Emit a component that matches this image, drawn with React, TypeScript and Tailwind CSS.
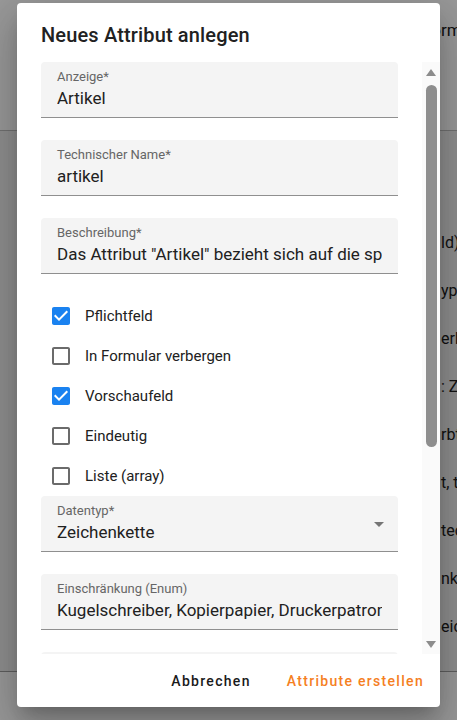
import React from 'react';

const fields = {
  top: [
    { label: 'Anzeige*', value: 'Artikel' },
    { label: 'Technischer Name*', value: 'artikel' },
    {
      label: 'Beschreibung*',
      value: 'Das Attribut "Artikel" bezieht sich auf die spezifische Bezeichnung des Produkts',
    },
  ],
};

const options = [
  { label: 'Pflichtfeld', checked: true },
  { label: 'In Formular verbergen', checked: false },
  { label: 'Vorschaufeld', checked: true },
  { label: 'Eindeutig', checked: false },
  { label: 'Liste (array)', checked: false },
];

const pageRows = ['ld) Pflicht', 'yp: Zeichenkette', 'erbergen', ': Zeichenkette', 'rbt', 't, typ', 'tec', 'nks', 'eich'];

function Field({ label, value, select }: { label: string; value: string; select?: boolean }) {
  return (
    <div className="relative h-14 shrink-0 rounded-t bg-[#f4f4f4] border-b border-[#8f8f8f] px-4">
      <div className="pt-[6px] text-[13px] leading-[17px] text-[#666666]">{label}</div>
      <div className="mt-[2px] overflow-hidden whitespace-nowrap text-[17px] leading-[23px] text-[#212121]">{value}</div>
      {select && (
        <svg className="absolute right-[7px] top-4 h-6 w-6" viewBox="0 0 24 24" fill="#757575">
          <path d="M7 10l5 5 5-5z" />
        </svg>
      )}
    </div>
  );
}

function CheckRow({ label, checked }: { label: string; checked: boolean }) {
  return (
    <div className="flex h-10 items-center">
      <svg className="ml-2 h-6 w-6 shrink-0" viewBox="0 0 24 24">
        {checked ? (
          <>
            <rect x="4" y="4" width="16" height="16" fill="#ffffff" />
            <path
              fill="#1a82f0"
              d="M19 3H5c-1.11 0-2 .9-2 2v14c0 1.1.89 2 2 2h14c1.11 0 2-.9 2-2V5c0-1.1-.89-2-2-2zm-9 14l-5-5 1.41-1.41L10 14.17l7.59-7.59L19 8l-9 9z"
            />
          </>
        ) : (
          <path
            fill="#6b6b6b"
            d="M19 5v14H5V5h14m0-2H5c-1.1 0-2 .9-2 2v14c0 1.1.9 2 2 2h14c1.1 0 2-.9 2-2V5c0-1.1-.9-2-2-2z"
          />
        )}
      </svg>
      <span className="ml-3 text-[15px] text-[#212121]">{label}</span>
    </div>
  );
}

export default function App() {
  return (
    <div className="relative h-[720px] w-[457px] overflow-hidden bg-white font-['Roboto',sans-serif]">
      {/* Page behind the dialog */}
      <div className="flex h-full flex-col bg-[#eeeeee] text-base text-[#212121]">
        <div className="h-[75px] bg-white pl-[422px] pt-[18px] whitespace-nowrap text-[17px]">
          Fo<span>rm</span><span className="text-[#e07a1f]">ular</span>
        </div>
        <div className="h-[56px] border-b border-[#bdbdbd] bg-white" />
        <div className="mt-[88px] flex flex-col">
          {pageRows.map((r) => (
            <div key={r} className="flex h-12 items-center whitespace-nowrap pl-[441px]">
              {r}
            </div>
          ))}
        </div>
        <div className="mt-5 flex-1 border-t border-[#9e9e9e] bg-white" />
      </div>

      {/* Backdrop + dialog */}
      <div className="absolute inset-0 flex items-start justify-center bg-black/40 pt-[3px]">
        <div className="flex h-[704px] w-[423px] flex-col rounded bg-white shadow-[0px_11px_15px_-7px_rgba(0,0,0,0.2),0px_24px_38px_3px_rgba(0,0,0,0.14),0px_9px_46px_8px_rgba(0,0,0,0.12)]">
          <h2 className="px-6 pt-4 pb-[11px] text-[20px] font-medium leading-8 tracking-[0.15px] text-[#212121]">
            Neues Attribut anlegen
          </h2>

          <div className="flex h-[592px]">
            <div className="flex flex-1 flex-col overflow-hidden px-6">
              {fields.top.map((f) => (
                <div key={f.label} className="mb-[22px]">
                  <Field label={f.label} value={f.value} />
                </div>
              ))}
              <div className="flex flex-col">
                {options.map((o) => (
                  <CheckRow key={o.label} label={o.label} checked={o.checked} />
                ))}
              </div>
              <div className="mb-[22px]">
                <Field label="Datentyp*" value="Zeichenkette" select />
              </div>
              <div className="mb-[22px]">
                <Field label="Einschränkung (Enum)" value="Kugelschreiber, Kopierpapier, Druckerpatronen, Notizblöcke" />
              </div>
              <Field label="Standardwert" value="" />
            </div>

            {/* Scrollbar */}
            <div className="flex w-[18px] flex-col items-center bg-[#fafafa]">
              <div className="flex h-5 items-center justify-center">
                <svg width="10" height="7" viewBox="0 0 10 7" fill="#8c8c8c">
                  <path d="M5 0L10 7H0z" />
                </svg>
              </div>
              <div className="mt-[3px] h-[362px] w-[11px] rounded-full bg-[#8e8e8e]" />
              <div className="flex-1" />
              <div className="flex h-5 items-center justify-center">
                <svg width="10" height="7" viewBox="0 0 10 7" fill="#8c8c8c">
                  <path d="M0 0H10L5 7z" />
                </svg>
              </div>
            </div>
          </div>

          <div className="flex h-[53px] items-center justify-end gap-5 px-2">
            <button className="px-2 py-[6px] text-sm font-medium leading-6 tracking-[1.3px] text-[#1a1a1a]">
              Abbrechen
            </button>
            <button className="px-2 py-[6px] text-sm font-medium leading-6 tracking-[1.3px] text-[#f5801f]">
              Attribute erstellen
            </button>
          </div>
        </div>
      </div>
    </div>
  );
}
